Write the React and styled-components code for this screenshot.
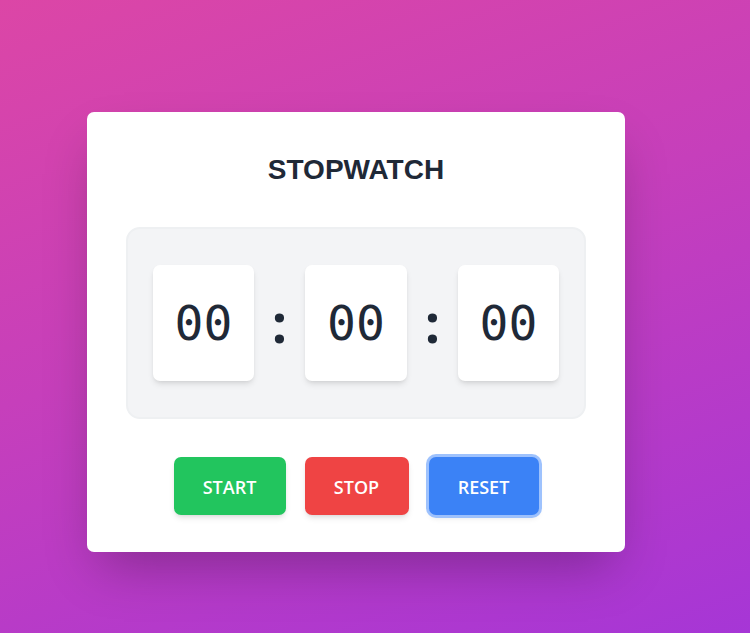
import React from "react";
import styled, { createGlobalStyle } from "styled-components";

const Global = createGlobalStyle`
  html, body { margin: 0; padding: 0; }
  body {
    min-height: 100vh;
    background: linear-gradient(160deg, #dc46a6 0%, #c63fbb 45%, #a636d6 100%);
    font-family: "Open Sans", "Liberation Sans", sans-serif;
  }
`;

const Page = styled.div`
  min-height: 633px;
  padding: 112px 0 0 87px;
  box-sizing: border-box;
`;

const Card = styled.div`
  width: 538px;
  height: 440px;
  box-sizing: border-box;
  background: #ffffff;
  border-radius: 7px;
  padding: 40px 39px 37px;
  box-shadow: 0 25px 50px -12px rgba(0, 0, 0, 0.28);
  display: flex;
  flex-direction: column;
  align-items: center;
`;

const Title = styled.h1`
  margin: 0;
  font-family: "Liberation Sans", Arial, sans-serif;
  font-weight: 600;
  font-size: 28px;
  line-height: 36px;
  color: #1f2937;
`;

const Panel = styled.div`
  margin-top: 39px;
  width: 460px;
  height: 192px;
  box-sizing: border-box;
  background: #f3f4f6;
  border: 2px solid #eef0f2;
  border-radius: 14px;
  display: flex;
  align-items: center;
  justify-content: center;
`;

const Digits = styled.div`
  width: ${(p) => p.$w}px;
  height: 116px;
  background: #ffffff;
  border-radius: 7px;
  box-shadow: 0 4px 6px -1px rgba(0, 0, 0, 0.1), 0 2px 4px -2px rgba(0, 0, 0, 0.1);
  display: flex;
  align-items: center;
  justify-content: center;
  font-family: "DejaVu Sans Mono", monospace;
  font-variant-numeric: slashed-zero;
  font-size: 48px;
  color: #1f2937;
`;

const Colon = styled.span`
  width: 51px;
  text-align: center;
  font-family: "Open Sans", "Liberation Sans", sans-serif;
  font-weight: 700;
  font-size: 54px;
  color: #1f2937;
  line-height: 1;
  padding-bottom: 2px;
`;

const Buttons = styled.div`
  margin-top: 38px;
  display: flex;
  gap: 19px;
`;

const Button = styled.button`
  width: ${(p) => p.$w}px;
  height: 58px;
  padding: 2px 0 0;
  border: none;
  border-radius: 7px;
  background: ${(p) => p.$bg};
  color: #ffffff;
  font-family: "Open Sans", "Liberation Sans", sans-serif;
  font-weight: 600;
  font-size: 18px;
  cursor: pointer;
  box-shadow: ${(p) =>
    p.$ring
      ? "0 0 0 3px rgba(147, 187, 253, 0.9), 0 4px 6px -1px rgba(0,0,0,0.1)"
      : "0 4px 6px -1px rgba(0, 0, 0, 0.1), 0 2px 4px -2px rgba(0, 0, 0, 0.1)"};
  ${(p) => (p.$ring ? "margin-left: 1px;" : "")}
`;

export default function App() {
  return (
    <>
      <Global />
      <Page>
        <Card>
          <Title>STOPWATCH</Title>
          <Panel>
            <Digits $w={101}>00</Digits>
            <Colon>:</Colon>
            <Digits $w={102}>00</Digits>
            <Colon>:</Colon>
            <Digits $w={101}>00</Digits>
          </Panel>
          <Buttons>
            <Button $bg="#22c55e" $w={112}>START</Button>
            <Button $bg="#ef4444" $w={104}>STOP</Button>
            <Button $bg="#3b82f6" $w={110} $ring>RESET</Button>
          </Buttons>
        </Card>
      </Page>
    </>
  );
}
